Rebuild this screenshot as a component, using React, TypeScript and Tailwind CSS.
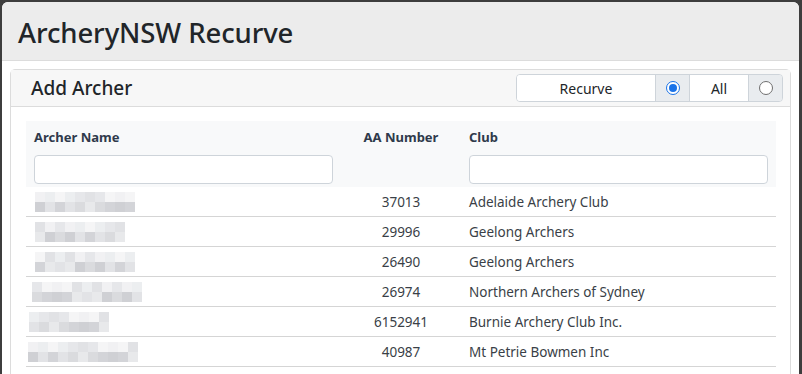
const light = ["bg-[#e6e7ea]", "bg-[#eceef0]", "bg-[#f1f1f3]", "bg-[#e1e2e5]", "bg-[#f5f5f6]"];
const dark = ["bg-[#d3d4d8]", "bg-[#dadbde]", "bg-[#e2e3e6]", "bg-[#cfd0d4]", "bg-[#e8e9eb]"];

type Row = { cells: number; offset: number; seed: number; aa: string; club: string };

const rows: Row[] = [
  { cells: 10, offset: 9, seed: 1, aa: "37013", club: "Adelaide Archery Club" },
  { cells: 9, offset: 9, seed: 4, aa: "29996", club: "Geelong Archers" },
  { cells: 10, offset: 9, seed: 2, aa: "26490", club: "Geelong Archers" },
  { cells: 11, offset: 6, seed: 5, aa: "26974", club: "Northern Archers of Sydney" },
  { cells: 8, offset: 3, seed: 3, aa: "6152941", club: "Burnie Archery Club Inc." },
  { cells: 11, offset: 2, seed: 6, aa: "40987", club: "Mt Petrie Bowmen Inc" },
];

function Blur({ cells, seed }: { cells: number; seed: number }) {
  const block = (set: string[], line: number) =>
    Array.from({ length: cells }, (_, i) => (
      <div key={i} className={`h-[10px] w-[10px] ${set[(i * 3 + seed * 2 + line + ((i * i) % 3)) % set.length]}`} />
    ));
  return (
    <div className="flex flex-col">
      <div className="flex">{block(light, 0)}</div>
      <div className="flex">{block(dark, 1)}</div>
    </div>
  );
}

function Radio({ checked }: { checked?: boolean }) {
  return checked ? (
    <span className="flex h-[14px] w-[14px] items-center justify-center rounded-full border-[1.5px] border-[#1a73e8] bg-white">
      <span className="h-[8px] w-[8px] rounded-full bg-[#1a73e8]" />
    </span>
  ) : (
    <span className="h-[14px] w-[14px] rounded-full border border-[#6f6f6f] bg-white" />
  );
}

export default function App() {
  return (
    <div
      className="h-[374px] w-[802px] overflow-hidden bg-[#3d3d3d] pl-[2px] pr-[3px] pt-[2px]"
      style={{ fontFamily: '"Noto Sans", "Open Sans", sans-serif' }}
    >
      <div className="h-full overflow-hidden rounded-t-[6px] bg-white">
        <div className="flex h-[59px] items-center border-b border-[#dcdcdc] bg-[#ececec] pl-4 pt-[3px]">
          <h1 className="text-[27.5px] font-medium leading-none tracking-[-0.1px] text-[#212529]">ArcheryNSW Recurve</h1>
        </div>

        <div className="px-2 pt-2">
          <div className="rounded-t-[5px] border border-[#dcdcdc]">
            <div className="flex h-[37px] items-center justify-between border-b border-[#dcdcdc] bg-[#f7f7f7] pl-5 pr-[7px]">
              <h2 className="text-[19px] font-medium text-[#212529]">Add Archer</h2>
              <div className="flex h-[28px] overflow-hidden rounded-[4px] border border-[#ced4da] text-[14px] text-[#212529]">
                <div className="flex w-[138px] items-center justify-center bg-white">Recurve</div>
                <div className="flex w-[34px] items-center justify-center border-l border-[#ced4da] bg-[#e9ecef]">
                  <Radio checked />
                </div>
                <div className="flex w-[59px] items-center justify-center border-l border-[#ced4da] bg-white">All</div>
                <div className="flex w-[34px] items-center justify-center border-l border-[#ced4da] bg-[#e9ecef]">
                  <Radio />
                </div>
              </div>
            </div>

            <div className="pb-4 pl-[15px] pr-[14px] pt-[14px]">
              <div className="w-[750px] text-[13.5px] text-[#212529]">
                <div className="grid h-[66px] grid-cols-[315px_120px_315px] bg-[#f8f9fa] text-[#2f3a4b]">
                  <div className="px-2 pt-[6px]">
                    <div className="h-[20px] text-[13px] font-bold leading-[20px]">Archer Name</div>
                    <div className="mt-2 h-[29px] rounded-[4px] border border-[#ced4da] bg-white" />
                  </div>
                  <div className="pt-[6px] text-center">
                    <div className="h-[20px] text-[13px] font-bold leading-[20px]">AA Number</div>
                  </div>
                  <div className="px-2 pt-[6px]">
                    <div className="h-[20px] text-[13px] font-bold leading-[20px]">Club</div>
                    <div className="mt-2 h-[29px] rounded-[4px] border border-[#ced4da] bg-white" />
                  </div>
                </div>

                {rows.map((r, i) => (
                  <div key={i} className="grid h-[30px] grid-cols-[315px_120px_315px] items-center border-b border-[#d5d5d5] pt-[1px] text-[#3a3f47]">
                    <div style={{ paddingLeft: r.offset }}>
                      <Blur cells={r.cells} seed={r.seed} />
                    </div>
                    <div className="text-center">{r.aa}</div>
                    <div className="px-2">{r.club}</div>
                  </div>
                ))}
              </div>
            </div>
          </div>
        </div>
      </div>
    </div>
  );
}
